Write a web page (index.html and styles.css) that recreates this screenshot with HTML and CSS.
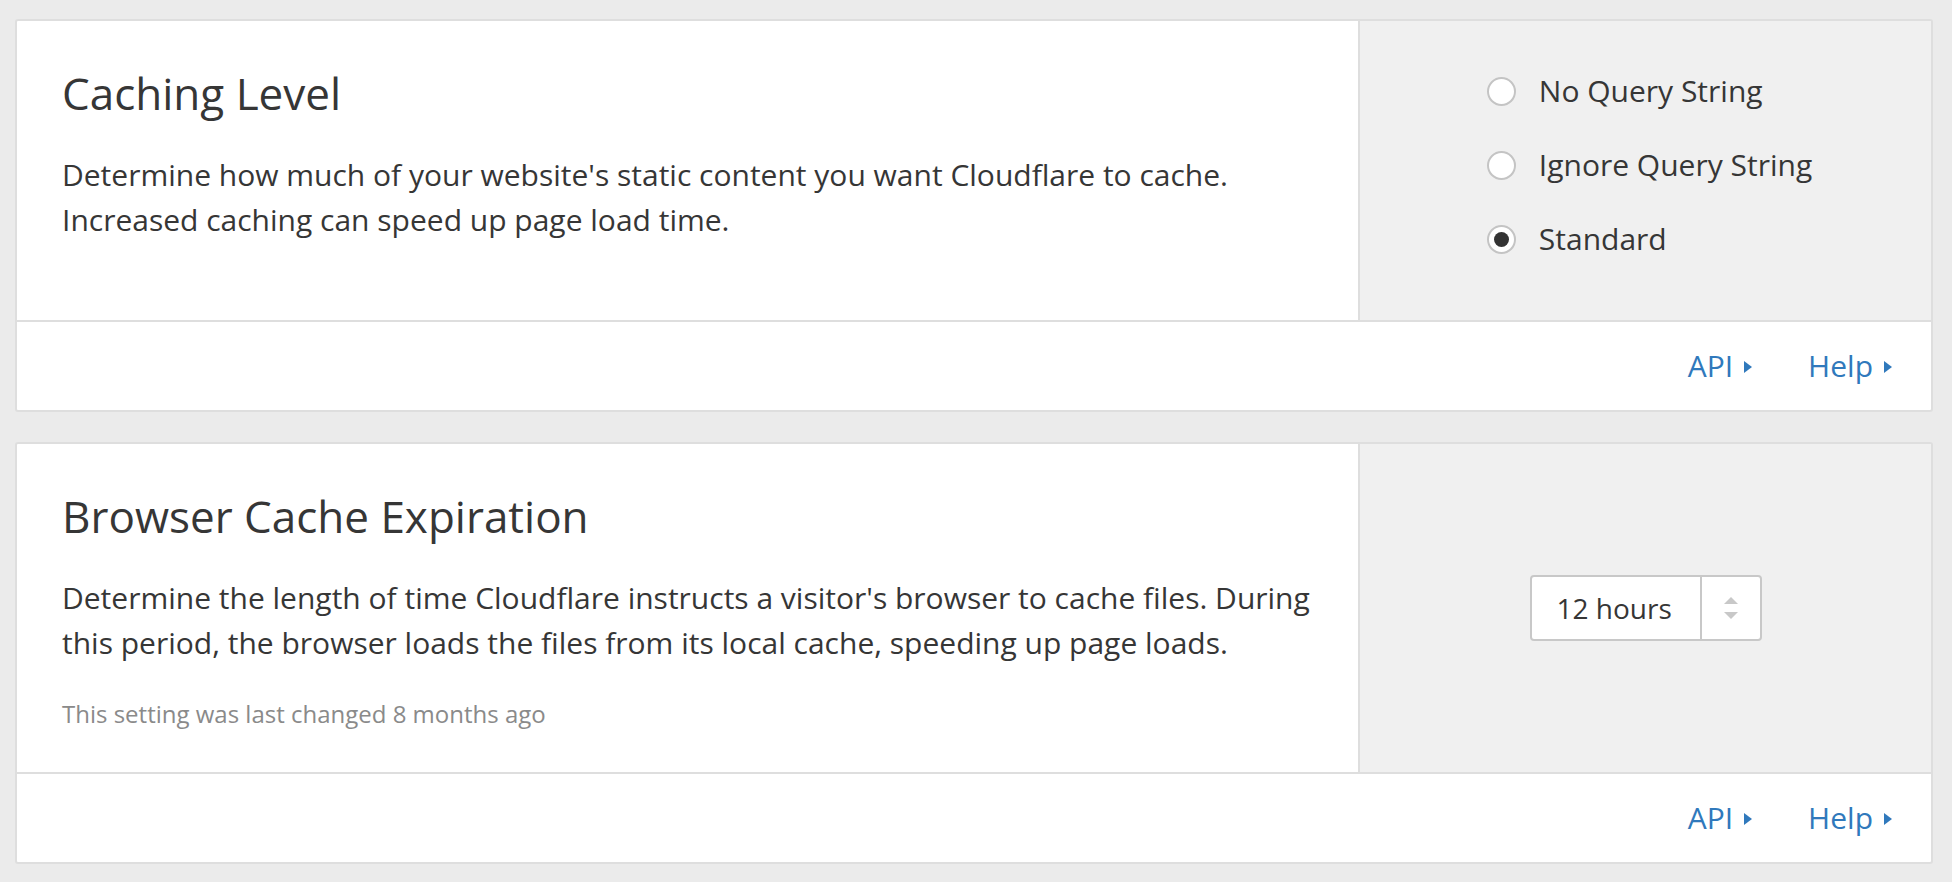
FILE: index.html
```html
<!DOCTYPE html>
<html lang="en">
<head>
<meta charset="utf-8">
<title>Caching settings</title>
<link rel="stylesheet" href="styles.css">
</head>
<body>
<main class="page">
  <section class="card">
    <div class="card-body">
      <div class="card-main">
        <h2 class="card-title">Caching Level</h2>
        <p class="card-desc">Determine how much of your website's static content you want Cloudflare to cache.<br>Increased caching can speed up page load time.</p>
      </div>
      <div class="card-control">
        <ul class="radio-list">
          <li class="radio-item"><span class="radio"></span><span class="radio-label">No Query String</span></li>
          <li class="radio-item"><span class="radio"></span><span class="radio-label">Ignore Query String</span></li>
          <li class="radio-item"><span class="radio radio-checked"></span><span class="radio-label">Standard</span></li>
        </ul>
      </div>
    </div>
    <div class="card-footer">
      <a class="link" href="#">API<span class="caret"></span></a>
      <a class="link" href="#">Help<span class="caret"></span></a>
    </div>
  </section>

  <section class="card">
    <div class="card-body">
      <div class="card-main">
        <h2 class="card-title">Browser Cache Expiration</h2>
        <p class="card-desc">Determine the length of time Cloudflare instructs a visitor's browser to cache files. During<br>this period, the browser loads the files from its local cache, speeding up page loads.</p>
        <p class="card-note">This setting was last changed 8 months ago</p>
      </div>
      <div class="card-control card-control-center">
        <div class="select">
          <span class="select-value">12 hours</span>
          <span class="select-arrows"><span class="arrow-up"></span><span class="arrow-down"></span></span>
        </div>
      </div>
    </div>
    <div class="card-footer">
      <a class="link" href="#">API<span class="caret"></span></a>
      <a class="link" href="#">Help<span class="caret"></span></a>
    </div>
  </section>
</main>
</body>
</html>
```
FILE: styles.css
```css
* { box-sizing: border-box; }

html, body {
  margin: 0;
  padding: 0;
  background: #ebebeb;
  font-family: "Open Sans", "Noto Sans", "Liberation Sans", sans-serif;
  color: #363636;
}

.page {
  padding: 19px 19px 0 15px;
  display: flex;
  flex-direction: column;
  gap: 30px;
}

.card {
  background: #fff;
  border: 2px solid #dedede;
  border-radius: 3px;
}

.card-body {
  display: flex;
  border-bottom: 2px solid #dedede;
}

.card-main {
  flex: 1;
  padding: 45px 24px 41px 45px;
}

.card-title {
  margin: 0;
  font-size: 44px;
  line-height: 55px;
  font-weight: 400;
  color: #363636;
}

.card-desc {
  margin: 31px 0 0;
  font-size: 30px;
  line-height: 45px;
  color: #363636;
}

.card-note {
  margin: 32px 0 0;
  font-size: 24px;
  line-height: 34px;
  color: #8a8a8a;
}

.card-control {
  width: 573px;
  flex: none;
  background: #f0f0f0;
  border-left: 2px solid #dedede;
  display: flex;
  justify-content: center;
  padding: 33px 0 44px;
}

.card-control-center {
  align-items: center;
  padding: 0;
}

.radio-list {
  list-style: none;
  margin: 0;
  padding: 0 0 0 8px;
}

.radio-item {
  display: flex;
  align-items: center;
  height: 74px;
  gap: 23px;
}

.radio {
  width: 29px;
  height: 29px;
  border-radius: 50%;
  border: 2px solid #c4c4c4;
  background: #fff;
  display: flex;
  align-items: center;
  justify-content: center;
  flex: none;
}

.radio-checked::after {
  content: "";
  width: 15px;
  height: 15px;
  border-radius: 50%;
  background: #333;
}

.radio-label {
  font-size: 30px;
  line-height: 40px;
  color: #363636;
}

.select {
  display: flex;
  width: 232px;
  height: 66px;
  background: #fff;
  border: 2px solid #c8c8c8;
  border-radius: 4px;
}

.select-value {
  flex: 1;
  display: flex;
  align-items: center;
  padding-left: 25px;
  font-size: 28px;
  color: #363636;
}

.select-arrows {
  width: 60px;
  border-left: 2px solid #c8c8c8;
  display: flex;
  flex-direction: column;
  align-items: center;
  justify-content: center;
  gap: 8px;
}

.arrow-up {
  width: 0;
  height: 0;
  border-left: 7.5px solid transparent;
  border-right: 7.5px solid transparent;
  border-bottom: 7px solid #c8c8c8;
}

.arrow-down {
  width: 0;
  height: 0;
  border-left: 7.5px solid transparent;
  border-right: 7.5px solid transparent;
  border-top: 7px solid #c8c8c8;
}

.card-footer {
  height: 88px;
  display: flex;
  justify-content: flex-end;
  align-items: center;
  gap: 56px;
  padding-right: 39px;
}

.link {
  display: flex;
  align-items: center;
  gap: 11px;
  font-size: 30px;
  line-height: 40px;
  color: #3079bc;
  text-decoration: none;
}

.caret {
  width: 0;
  height: 0;
  border-top: 6px solid transparent;
  border-bottom: 6px solid transparent;
  border-left: 8px solid #3079bc;
  margin-top: 2px;
}
```
